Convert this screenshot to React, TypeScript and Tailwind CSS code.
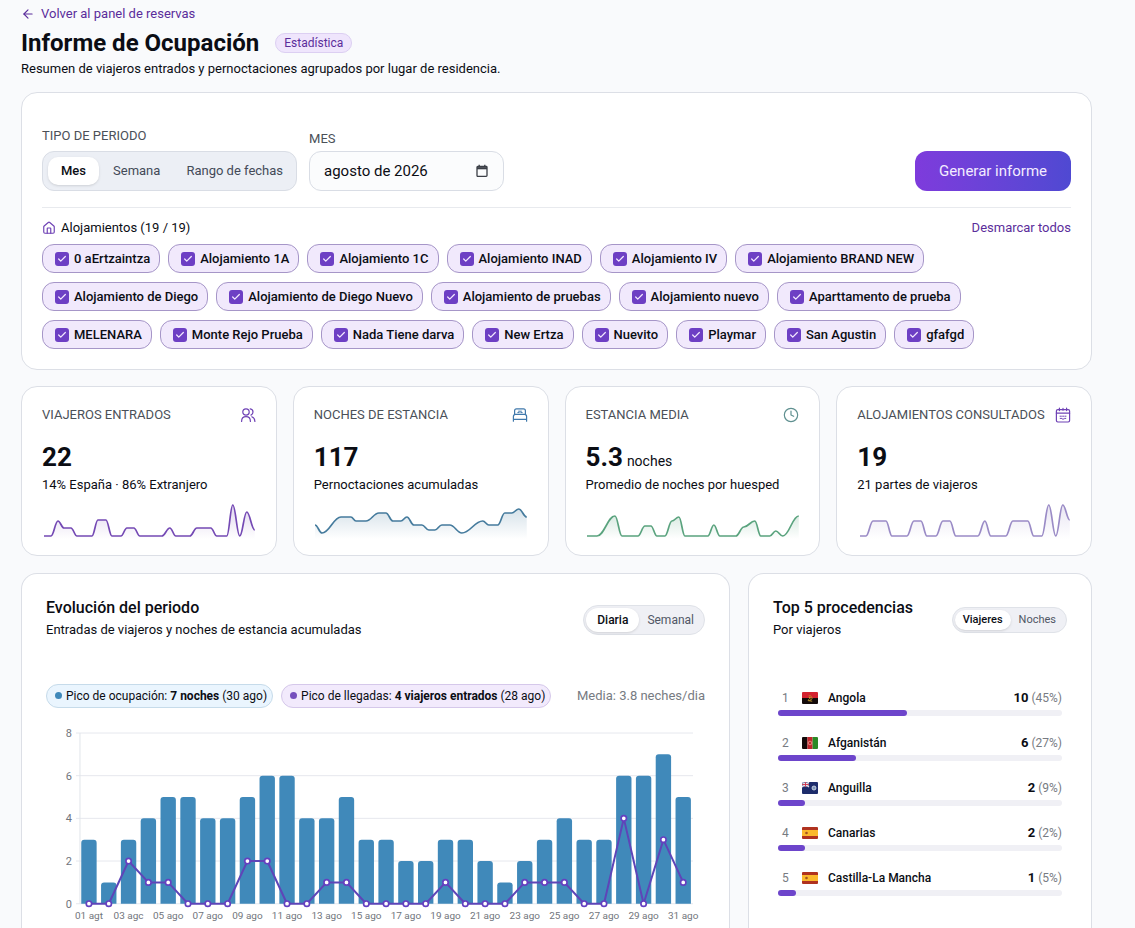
import type { ReactNode } from "react";
import { ArrowLeft, Check, Clock, House } from "lucide-react";

const LODGINGS = [
  ["0 aErtzaintza", "Alojamiento 1A", "Alojamiento 1C", "Alojamiento INAD", "Alojamiento IV", "Alojamiento BRAND NEW"],
  ["Alojamiento de Diego", "Alojamiento de Diego Nuevo", "Alojamiento de pruebas", "Alojamiento nuevo", "Aparttamento de prueba"],
  ["MELENARA", "Monte Rejo Prueba", "Nada Tiene darva", "New Ertza", "Nuevito", "Playmar", "San Agustin", "gfafgd"],
];

const NIGHTS = [3, 1, 3, 4, 5, 5, 4, 4, 5, 6, 6, 4, 4, 5, 3, 3, 2, 2, 3, 3, 2, 1, 2, 3, 4, 3, 3, 6, 6, 7, 5];
const ARRIVALS = [0, 0, 2, 1, 1, 0, 0, 0, 2, 2, 0, 0, 1, 1, 0, 0, 0, 0, 1, 0, 0, 0, 1, 1, 1, 0, 0, 4, 0, 3, 1];

const DAY_LABELS = [
  "01 agt", "03 agc", "05 ago", "07 ago", "09 ago", "11 ago", "13 ago", "15 ago",
  "17 ago", "19 ago", "21 ago", "23 ago", "25 ago", "27 ago", "29 ago", "31 ago",
];

const SPARK_W = 214;
const SPARK_H = 40;

type Point = [number, number];

// Smooths a polyline with horizontal tangents at each point
function smoothPath(points: Point[]) {
  return points.reduce((d, [x, y], i) => {
    if (i === 0) return `M${x} ${y}`;
    const [px, py] = points[i - 1];
    const k = (x - px) * 0.4;
    return `${d} C${px + k} ${py} ${x - k} ${y} ${x} ${y}`;
  }, "");
}

type SparklineProps = {
  id: string;
  color: string;
  points: Point[];
};

function Sparkline({ id, color, points }: SparklineProps) {
  const line = smoothPath(points);
  const first = points[0];
  const last = points[points.length - 1];

  return (
    <svg viewBox={`0 0 ${SPARK_W} ${SPARK_H}`} className="block h-10 w-full" preserveAspectRatio="none" aria-hidden="true">
      <defs>
        <linearGradient id={id} x1="0" y1="0" x2="0" y2="1">
          <stop offset="0" stopColor={color} stopOpacity="0.22" />
          <stop offset="1" stopColor={color} stopOpacity="0" />
        </linearGradient>
      </defs>
      <path d={`${line} L${last[0]} 38 L${first[0]} 38 Z`} fill={`url(#${id})`} />
      <path d={line} fill="none" stroke={color} strokeWidth="1.7" strokeLinejoin="round" />
    </svg>
  );
}

function UsersIcon() {
  return (
    <svg viewBox="0 0 16 16" className="size-4 shrink-0" fill="none" stroke="#6f42b5" strokeWidth="1.2" strokeLinecap="round" aria-hidden="true">
      <circle cx="6" cy="5" r="3.2" />
      <path d="M1.6 14.4c0-3 1.8-4.800 4.400-4.800s4.400 1.800 4.400 4.800" />
      <path d="M10.2 1.9c1.9.3 2.800 1.600 2.800 3.100s-.7 2.400-2 3.100" />
      <path d="M11.8 9.8c1.9.7 3.100 2.300 3.100 4.600" />
    </svg>
  );
}

function BedIcon() {
  return (
    <svg viewBox="0 0 16 16" className="size-4 shrink-0" fill="none" stroke="#3f78ab" strokeWidth="1.2" strokeLinejoin="round" strokeLinecap="round" aria-hidden="true">
      <path d="M2.6 7.4V3.8c0-1.100.7-1.900 1.900-1.900h7c1.200 0 1.900.8 1.900 1.900v3.600" />
      <path d="M1.4 14.2v-4.600c0-1.400.8-2.200 2-2.200h9.200c1.200 0 2 .8 2 2.200v4.600M1.400 12.400h13.200" />
      <path d="M5.8 5.6h1.400M8.8 5.6h1.400M6.6 4.2h2.800" strokeWidth="1" />
    </svg>
  );
}

function CalendarIcon() {
  return (
    <svg viewBox="0 0 16 16" className="size-4 shrink-0" fill="none" stroke="#6f42b5" strokeWidth="1.2" strokeLinejoin="round" strokeLinecap="round" aria-hidden="true">
      <rect x="1.4" y="2.6" width="13.2" height="12.4" rx="1.4" />
      <path d="M1.4 6.2h13.2M4.4 1v2.600M8 1.400v1.800M11.600 1v2.600" />
      <path d="M5 9.2h1.400M7.600 9.200h1M9.800 9.200H11M5.200 11.400h1.400M7.400 12h1.400M9.600 11.400h1.200" strokeWidth="1" />
    </svg>
  );
}

function DateIcon() {
  return (
    <svg viewBox="0 0 14 14" className="pointer-events-none absolute top-[13px] right-[15px] size-[14px]" fill="none" stroke="#3b3f47" strokeWidth="1.3" aria-hidden="true">
      <rect x="2" y="2.4" width="10" height="10" rx="0.8" />
      <path d="M2 4.2h10" strokeWidth="2.2" />
      <path d="M4.2 0.8v2M9.8 0.8v2" />
    </svg>
  );
}

type StatCardProps = {
  title: string;
  value: string;
  unit?: string;
  detail: string;
  icon: ReactNode;
  children: ReactNode;
};

function StatCard({ title, value, unit, detail, icon, children }: StatCardProps) {
  return (
    <article className="min-w-0 rounded-2xl border border-[#dcdfe6] bg-white px-5 pt-5 pb-[14px]">
      <div className="flex h-4 items-center justify-between">
        <h2 className="text-[13px] whitespace-nowrap text-[#4b5058]">{title}</h2>
        {icon}
      </div>
      <p className="mt-[18px] flex h-8 items-baseline gap-1 leading-8">
        <span className="text-[26px] font-bold">{value}</span>
        {unit ? <span className="text-sm">{unit}</span> : null}
      </p>
      <p className="mt-[2px] mb-[6px] text-[13px] leading-5">{detail}</p>
      {children}
    </article>
  );
}

function Flag({ code }: { code: string }) {
  return (
    <svg viewBox="0 0 16 12" className="h-3 w-4 shrink-0 rounded-[1px]" aria-hidden="true">
      {code === "ao" && (
        <>
          <path d="M0 0h16v6H0z" fill="#d3222f" />
          <path d="M0 6h16v6H0z" fill="#140a0a" />
          <path d="M6.600 4a2.300 2.300 0 1 1-.6 3.600M5.800 8.600l4.400.6" fill="none" stroke="#b8902a" strokeWidth="1" />
          <circle cx="7.800" cy="5.800" r="0.900" fill="#d9a92c" />
        </>
      )}
      {code === "af" && (
        <>
          <path d="M0 0h5.4v12H0z" fill="#140a0a" />
          <path d="M5.4 0h5.2v12H5.4z" fill="#c0262c" />
          <path d="M10.6 0H16v12h-5.4z" fill="#2a8a25" />
          <circle cx="8" cy="6" r="1.8" fill="none" stroke="#eda08c" strokeWidth="0.8" />
        </>
      )}
      {code === "ai" && (
        <>
          <path d="M0 0h16v12H0z" fill="#1d2c6b" />
          <path d="M0 0l7 5M7 0L0 5" stroke="#e9e4ee" strokeWidth="1.2" />
          <path d="M3.5 0v5M0 2.5h7" stroke="#f3eef3" strokeWidth="1.8" />
          <path d="M3.5 0v5M0 2.5h7" stroke="#c8304a" strokeWidth="0.9" />
          <circle cx="12" cy="6" r="2" fill="#7f96b8" stroke="#dfe6ef" strokeWidth="0.8" />
        </>
      )}
      {code === "es" && (
        <>
          <path d="M0 0h16v12H0z" fill="#b0321f" />
          <path d="M0 3h16v6H0z" fill="#fbb92c" />
          <circle cx="4.5" cy="6" r="1.3" fill="#a3521f" />
        </>
      )}
    </svg>
  );
}

const ORIGINS = [
  { name: "Angola", code: "ao", count: 10, share: "45%", bar: 45.5 },
  { name: "Afganistán", code: "af", count: 6, share: "27%", bar: 27.5 },
  { name: "Anguilla", code: "ai", count: 2, share: "9%", bar: 9.5 },
  { name: "Canarias", code: "es", count: 2, share: "2%", bar: 9.5 },
  { name: "Castilla-La Mancha", code: "es", count: 1, share: "5%", bar: 6.5 },
];

function EvolutionChart() {
  const left = 34;
  const top = 8;
  const step = 19.84;
  const unit = 21.375;
  const base = top + unit * 8;
  const cx = (i: number) => left + 9 + i * step;

  return (
    <svg viewBox="0 0 660 220" className="block w-full" role="img" aria-label="Entradas y noches por día">
      {[0, 2, 4, 6, 8].map((n) => (
        <g key={n}>
          <path d={`M${left - 4} ${base - n * unit}H648`} stroke="#e6e8ee" />
          <text x="26" y={base - n * unit + 4} textAnchor="end" fontSize="11" fill="#71757c">{n}</text>
        </g>
      ))}
      <path d={`M${left} ${top}V${base}`} stroke="#e1e5ea" />
      {NIGHTS.map((n, i) => {
        const x = cx(i) - 7.7;
        const y = base - n * unit;
        return <path key={i} d={`M${x} ${base}V${y + 3}q0 -3 3 -3h9.4q3 0 3 3V${base}z`} fill="#4089ba" />;
      })}
      <polyline points={ARRIVALS.map((n, i) => `${cx(i)},${base - n * unit}`).join(" ")} fill="none" stroke="#5e45b8" strokeWidth="2" strokeLinejoin="round" />
      {ARRIVALS.map((n, i) => (
        <circle key={i} cx={cx(i)} cy={base - n * unit} r="2.7" fill="#fff" stroke="#6540c0" strokeWidth="1.7" />
      ))}
      {DAY_LABELS.map((label, i) => (
        <text key={label} x={cx(i * 2)} y={base + 15} textAnchor="middle" fontSize="10" fill="#71757c">{label}</text>
      ))}
    </svg>
  );
}

export default function App() {
  return (
    <main className="min-h-screen bg-[#f9fafc] pt-1 pr-[43px] pl-[21px] font-['Roboto',sans-serif] text-[#0b0d14]">
      <header>
        <a href="#" className="flex h-5 w-fit items-center gap-[6px] text-[13px] text-[#5b2d9b]">
          <ArrowLeft className="size-[14px]" />
          Volver al panel de reservas
        </a>
        <div className="mt-[3px] flex h-8 items-center gap-4">
          <h1 className="text-2xl font-bold">Informe de Ocupación</h1>
          <span className="flex h-5 items-center rounded-full border border-[#dccff2] bg-[#efe5fc] px-2 text-xs text-[#5b2d9b]">Estadística</span>
        </div>
        <p className="text-[13px] leading-5">Resumen de viajeros entrados y pernoctaciones agrupados por lugar de residencia.</p>
      </header>

      <form className="mt-[13px] rounded-2xl border border-[#dcdfe6] bg-white px-5 pt-8 pb-5">
        <div className="flex h-[66px] items-end">
          <fieldset>
            <legend className="mb-[5px] text-[13px] leading-5 text-[#4b5058]">TIPO DE PERIODO</legend>
            <div className="flex h-10 items-center rounded-xl border border-[#d9dde5] bg-[#eceff5] px-[5px] text-[13px] text-[#434a58]">
              <button type="button" className="h-7 rounded-[10px] bg-white px-[13px] font-medium text-[#0b0d14] shadow-sm">Mes</button>
              <button type="button" className="h-7 px-[14px]">Semana</button>
              <button type="button" className="h-7 pr-2 pl-3">Rango de fechas</button>
            </div>
          </fieldset>
          <div className="ml-3">
            <label htmlFor="month" className="mb-[2px] block text-[13px] leading-5 text-[#4b5058]">MES</label>
            <div className="relative">
              <input id="month" readOnly value="agosto de 2026" className="h-10 w-[195px] rounded-xl border border-[#d9dde5] bg-[#fbfcfd] px-[14px] text-[15px]" />
              <DateIcon />
            </div>
          </div>
          <button type="submit" className="ml-auto h-10 rounded-xl bg-linear-to-r from-[#7e3bdc] to-[#4f49d2] px-6 text-[15px] text-[#f3ecff]">Generar informe</button>
        </div>

        <fieldset className="mt-4 border-t border-[#e8eaee] pt-[10px]">
          <div className="flex h-5 items-center gap-[5px] text-[13px]">
            <House className="size-[14px] text-[#6f42b5]" />
            <span>Alojamientos (19 / 19)</span>
            <button type="button" className="ml-auto text-[#5b2d9b]">Desmarcar todos</button>
          </div>
          <div className="mt-[6px] flex flex-col gap-[9px]">
            {LODGINGS.map((row) => (
              <div key={row[0]} className="flex gap-2">
                {row.map((name) => (
                  <label key={name} className="flex h-[29px] items-center rounded-xl border border-[#a696c8] bg-[#f1e9fc] pr-[9px] pl-3 text-[13px] font-medium whitespace-nowrap">
                    <span className="relative mr-[5px] size-[14px]">
                      <input type="checkbox" defaultChecked className="block size-[14px] appearance-none rounded-[3px] bg-[#6d3fc4]" />
                      <Check className="pointer-events-none absolute top-[2px] left-[2px] size-[10px] text-[#f3e8ff]" strokeWidth={3} />
                    </span>
                    {name}
                  </label>
                ))}
              </div>
            ))}
          </div>
        </fieldset>
      </form>

      <section className="mt-4 grid grid-cols-4 gap-4">
        <StatCard title="VIAJEROS ENTRADOS" value="22" detail="14% España · 86% Extranjero" icon={<UsersIcon />}>
          <Sparkline id="spark-guests" color="#7449b4" points={[[2, 35], [9, 35], [16, 20], [22, 27], [29, 27], [35, 35], [50, 35], [56, 19], [64, 19], [70, 35], [79, 35], [85, 27], [92, 27], [98, 35], [120, 35], [128, 27], [134, 35], [148, 35], [155, 27], [169, 27], [175, 35], [185, 35], [191, 4], [198, 35], [205, 11], [213, 29]]} />
        </StatCard>
        <StatCard title="NOCHES DE ESTANCIA" value="117" detail="Pernoctaciones acumuladas" icon={<BedIcon />}>
          <Sparkline id="spark-nights" color="#457b9d" points={[[1, 24], [8, 32], [27, 16], [37, 16], [42, 20], [52, 20], [65, 12], [72, 12], [79, 20], [87, 20], [93, 16], [100, 24], [108, 24], [115, 29], [121, 29], [128, 24], [136, 24], [148, 32], [169, 20], [175, 24], [184, 24], [191, 12], [198, 12], [205, 8], [213, 16]]} />
        </StatCard>
        <StatCard title="ESTANCIA MEDIA" value="5.3" unit="noches" detail="Promedio de noches por huesped" icon={<Clock className="size-4 shrink-0 text-[#5f9090]" strokeWidth={1.8} />}>
          <Sparkline id="spark-stay" color="#5aa37e" points={[[1, 35], [11, 35], [29, 15], [36, 35], [52, 35], [59, 25], [65, 25], [71, 35], [79, 35], [86, 20], [93, 16], [99, 35], [122, 35], [128, 24], [134, 35], [150, 35], [158, 26], [169, 20], [175, 35], [184, 35], [190, 30], [197, 35], [213, 15]]} />
        </StatCard>
        <StatCard title="ALOJAMIENTOS CONSULTADOS" value="19" detail="21 partes de viajeros" icon={<CalendarIcon />}>
          <Sparkline id="spark-lodgings" color="#9a8bc6" points={[[3, 35], [9, 35], [16, 20], [29, 20], [35, 35], [50, 35], [57, 20], [64, 20], [70, 35], [79, 35], [86, 20], [93, 20], [99, 35], [121, 35], [128, 20], [134, 35], [149, 35], [156, 20], [171, 20], [177, 35], [185, 35], [192, 4], [199, 35], [206, 4], [213, 19]]} />
        </StatCard>
      </section>

      <section className="mt-[17px] grid grid-cols-[709fr_344fr] gap-[18px]">
        <article className="min-w-0 rounded-t-2xl border border-b-0 border-[#dcdfe6] bg-white px-6 pt-6">
          <div className="flex h-10 items-start justify-between">
            <div>
              <h2 className="text-base leading-5 font-medium">Evolución del periodo</h2>
              <p className="text-[13px] leading-6">Entradas de viajeros y noches de estancia acumuladas</p>
            </div>
            <div className="mt-[7px] flex h-[30px] items-center rounded-full border border-[#dfe2e8] bg-[#eff0f5] px-[2px] text-xs text-[#505765]">
              <button type="button" className="h-6 rounded-full bg-white px-[11px] font-medium text-[#0b0d14] shadow-sm">Diaria</button>
              <button type="button" className="h-6 px-2">Semanal</button>
            </div>
          </div>
          <div className="mt-[45px] flex h-[25px] items-center gap-2 text-xs whitespace-nowrap">
            <span className="flex h-6 items-center gap-1 rounded-full border border-[#c6dbea] bg-[#eaf5fe] pr-[5px] pl-2">
              <span className="size-[7px] rounded-full bg-[#4089ba]" />
              <span>Pico de ocupación: <b>7 noches</b> (30 ago)</span>
            </span>
            <span className="flex h-6 items-center gap-1 rounded-full border border-[#d5c8ea] bg-[#f2eafc] pr-[5px] pl-2">
              <span className="size-[7px] rounded-full bg-[#7650bd]" />
              <span>Pico de llegadas: <b>4 viajeros entrados</b> (28 ago)</span>
            </span>
            <span className="ml-auto text-[13px] text-[#777b82]">Media: 3.8 neches/dia</span>
          </div>
          <div className="mt-[17px]">
            <EvolutionChart />
          </div>
        </article>

        <article className="min-w-0 rounded-t-2xl border border-b-0 border-[#dcdfe6] bg-white px-6 pt-6">
          <div className="flex h-10 items-start justify-between">
            <div>
              <h2 className="text-base leading-5 font-medium">Top 5 procedencias</h2>
              <p className="text-[13px] leading-6">Por viajeros</p>
            </div>
            <div className="mt-[9px] flex h-[26px] items-center rounded-full border border-[#dfe2e8] bg-[#eff0f5] px-[2px] text-[11px] text-[#505765]">
              <button type="button" className="h-5 rounded-full bg-white px-2 font-medium text-[#0b0d14] shadow-sm">Viajeres</button>
              <button type="button" className="h-5 px-2">Noches</button>
            </div>
          </div>
          <ol className="mt-12 px-[5px]">
            {ORIGINS.map((o, i) => (
              <li key={o.name} className="mb-[15px]">
                <div className="flex h-6 items-center text-xs">
                  <span className="w-6 pl-1 text-[#777b82]">{i + 1}</span>
                  <Flag code={o.code} />
                  <span className="ml-[10px] font-medium">{o.name}</span>
                  <span className="ml-auto text-[#777b82]">
                    <b className="text-[13px] text-[#0b0d14]">{o.count}</b> ({o.share})
                  </span>
                </div>
                <div className="h-[6px] rounded-full bg-[#f0f0f5]">
                  <div className="h-[6px] rounded-full bg-[#6d45cb]" style={{ width: `${o.bar}%` }} />
                </div>
              </li>
            ))}
          </ol>
        </article>
      </section>
    </main>
  );
}
